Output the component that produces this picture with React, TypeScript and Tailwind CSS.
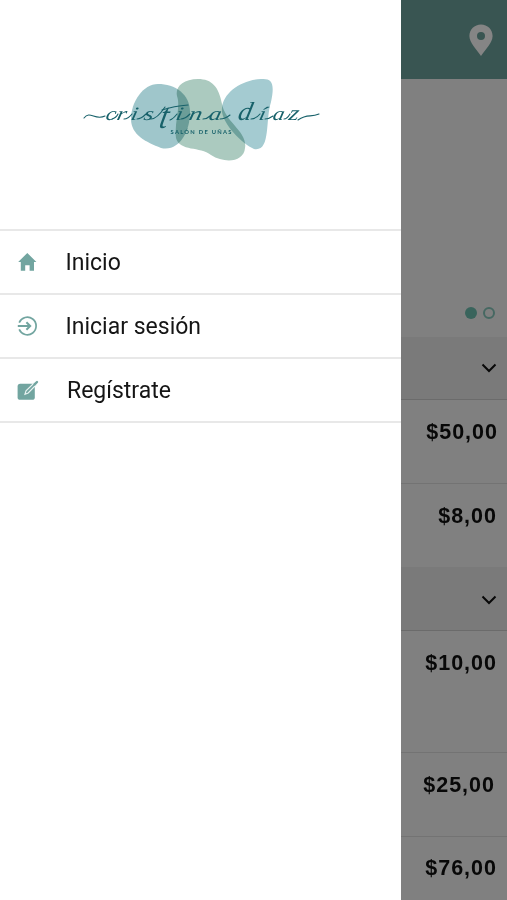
import type { ReactNode } from 'react';

const menu: { label: string; icon: ReactNode; pad: string }[] = [
  {
    label: 'Inicio',
    pad: 'pl-[65.5px]',
    icon: (
      <svg viewBox="0 0 20 20" className="size-5" fill="#72a5a0">
        <path d="M10.3 1 19.4 10H17V18.8h-4.4v-5.6H8.2v5.6H3.8V10H1.2z" />
      </svg>
    ),
  },
  {
    label: 'Iniciar sesión',
    pad: 'pl-[65.5px]',
    icon: (
      <svg viewBox="0 0 20 20" className="size-5" fill="none" stroke="#72a5a0" strokeWidth="1.7">
        <path d="M2.2 6.6A8.8 8.8 0 1 1 2.2 13.4" />
        <path d="M0.8 10h12M9.4 6.2 13.2 10 9.4 13.8" strokeWidth="2" />
      </svg>
    ),
  },
  {
    label: 'Regístrate',
    pad: 'pl-[67px]',
    icon: (
      <svg viewBox="0 0 20 20" className="size-5 overflow-visible">
        <rect x="0.6" y="3.8" width="17.2" height="16" rx="2.6" fill="#72a5a0" />
        <path d="M8 14.2 9 10.9 17 3 19 5 11.2 13z" fill="#72a5a0" stroke="#e9f2f1" strokeWidth="1.2" />
        <path d="M17.6 4.4 20 2" stroke="#72a5a0" strokeWidth="2.4" strokeLinecap="round" />
      </svg>
    ),
  },
];

// letra, posición x, tamaño y estiramiento horizontal
const script: [string, number, number, number][] = [
  ['c', 24, 19, 1.2],
  ['r', 35, 19, 1.3],
  ['i', 49, 19, 1.3],
  ['s', 62, 19, 1.3],
  ['t', 77, 36, 0.85],
  ['i', 94, 19, 1.3],
  ['n', 107, 19, 1.4],
  ['a', 127, 19, 1.3],
  ['d', 156, 26, 1.05],
  ['í', 177, 19, 1.3],
  ['a', 191, 19, 1.2],
  ['z', 207, 21, 1.2],
];

function Logo() {
  return (
    <svg viewBox="0 0 240 90" className="mt-[74px] ml-[81px] h-[90px] w-[240px] shrink-0">
      <path d="M77 10C62 10 50 28 50 45C50 61 65 68 80 74C98 78 109 58 109 38C109 20 94 10 77 10Z" fill="#9fc6cb" />
      <path className="mix-blend-multiply" d="M117 5C102 5 94 13 96 22C100 33 93 49 95 64C99 78 119 72 130 81C144 90 163 88 164 74C167 58 144 48 141 30C138 13 131 5 117 5Z" fill="#abcabf" />
      <path className="mix-blend-multiply" d="M180 5C160 6 142 19 141 34C139 48 161 70 173 75C190 78 184 47 190 28C194 9 191 4 180 5Z" fill="#a4cbd1" />
      <g fill="#17616a" fontFamily="'Liberation Serif', serif" fontStyle="italic">
        {script.map(([letter, x, size, stretch], i) => (
          <text key={i} fontSize={size} transform={`translate(${x} ${letter === 't' ? 54 : 46}) skewX(-12) scale(${stretch} 1)`}>
            {letter}
          </text>
        ))}
      </g>
      {/* trazos de enlace y remates */}
      <g fill="none" stroke="#17616a" strokeWidth="1.1" strokeLinecap="round">
        <path d="M3 44C9 36 14 47 24 42" />
        <path d="M31 45Q35 44 37 40M43 45Q47 45 51 40M56 45Q60 45 65 40M70 45Q76 45 84 33M89 46Q92 45 96 40M100 45Q104 45 109 40M122 45Q126 45 129 42M139 45Q144 45 149 41M170 45Q175 45 179 40M184 45Q188 45 192 42M203 45Q206 45 209 40" />
        <path d="M81 36Q93 32 107 31" />
        <path d="M217 46C227 39 229 44 238 40" />
      </g>
      <text x="89.5" y="60" fontSize="5.8" fontFamily="'Lato', sans-serif" fontWeight="700" fill="#17616a" textLength="61">SALÓN DE UÑAS</text>
    </svg>
  );
}

function Chevron() {
  return (
    <svg viewBox="0 0 16 10" className="h-[10px] w-4" fill="none" stroke="#080808" strokeWidth="2">
      <path d="m1.5 1.5 6.5 6.5 6.5-6.5" />
    </svg>
  );
}

function Price({ value, box }: { value: string; box: string }) {
  return (
    <div className={`flex justify-end border-[#737373] text-[21.5px] leading-6 font-semibold tracking-[1px] text-[#080808] ${box}`}>
      {value}
    </div>
  );
}

export default function App() {
  return (
    <div className="flex h-[900px] w-[507px] overflow-hidden bg-white font-['Roboto',sans-serif]">
      <aside className="flex w-[401px] shrink-0 flex-col bg-white">
        <div className="h-[229px]">
          <Logo />
        </div>
        <nav className="border-t-2 border-[#e8e8e8]">
          {menu.map((item) => (
            <a key={item.label} className="relative flex h-16 items-center border-b-2 border-[#e8e8e8]">
              <span className="absolute left-[17px]">{item.icon}</span>
              <span className={`text-[23px] leading-none text-[#151515] ${item.pad}`}>{item.label}</span>
            </a>
          ))}
        </nav>
      </aside>

      {/* página atenuada detrás del menú */}
      <main className="flex w-[106px] shrink-0 flex-col bg-[#808080] font-['Liberation_Sans',sans-serif]">
        <header className="flex h-[79px] shrink-0 justify-end bg-[#395552] pt-[24px] pr-[14px]">
          <svg viewBox="0 0 24 32" className="h-8 w-6" fill="#858585" fillRule="evenodd">
            <path d="M12 0.5C5.5 0.5 0.4 5.5 0.4 12C0.4 19 7.5 25 12 32C16.5 25 23.6 19 23.6 12C23.6 5.5 18.5 0.5 12 0.5ZM12 8a4 4 0 1 1 0 8a4 4 0 0 1 0-8Z" />
          </svg>
        </header>
        <div className="flex h-[258px] shrink-0 items-end justify-end gap-[6px] pr-3 pb-[18px]">
          <span className="size-3 rounded-full bg-[#39645c]" />
          <span className="size-3 rounded-full border-2 border-[#466862]" />
        </div>
        <div className="flex h-[63px] shrink-0 items-center justify-end border-b border-[#6b6b6b] bg-[#7a7a7a] pr-[10px]">
          <Chevron />
        </div>
        <Price value="$50,00" box="h-[84px] border-b pt-5 pr-[9px]" />
        <Price value="$8,00" box="h-[83px] pt-5 pr-[10px]" />
        <div className="flex h-[64px] shrink-0 items-center justify-end border-b border-[#6b6b6b] bg-[#7a7a7a] pt-[2px] pr-[10px]">
          <Chevron />
        </div>
        <Price value="$10,00" box="h-[122px] border-b pt-5 pr-[10px]" />
        <Price value="$25,00" box="h-[84px] border-b pt-5 pr-[12px]" />
        <Price value="$76,00" box="h-[63px] pt-[19px] pr-[10px]" />
      </main>
    </div>
  );
}
